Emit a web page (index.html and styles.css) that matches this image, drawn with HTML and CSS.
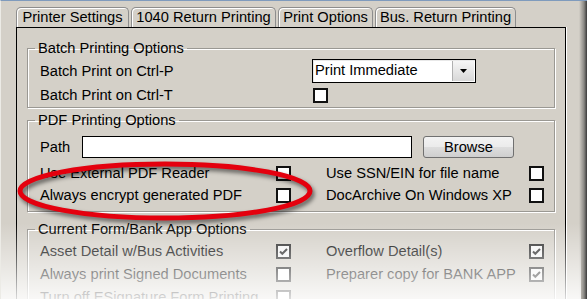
FILE: index.html
```html
<!DOCTYPE html>
<html>
<head>
<meta charset="utf-8">
<link rel="stylesheet" href="styles.css">
</head>
<body>
<div class="window">
  <div class="tabs">
    <div class="tab tab-1">Printer Settings</div>
    <div class="tab tab-2">1040 Return Printing</div>
    <div class="tab tab-3">Print Options</div>
    <div class="tab tab-4">Bus. Return Printing</div>
  </div>
  <div class="panel">
    <fieldset class="group g1">
      <legend>Batch Printing Options</legend>
      <div class="row1">
        <span class="label">Batch Print on Ctrl-P</span>
        <div class="select">
          <span class="select-text">Print Immediate</span>
          <span class="select-btn"><svg width="7" height="4" viewBox="0 0 7 4"><path d="M0 0H7L3.5 4Z" fill="#000"/></svg></span>
        </div>
        <span class="label">Batch Print on Ctrl-T</span>
        <span class="cb cb-g1"></span>
      </div>
    </fieldset>

    <fieldset class="group g2">
      <legend>PDF Printing Options</legend>
      <div class="path-row">
        <span class="label">Path</span>
        <div class="input"></div>
        <div class="button">Browse</div>
      </div>
      <div class="grid2 grid-g2">
        <span class="label">Use External PDF Reader</span>
        <span class="cb"></span>
        <span></span>
        <span class="label">Use SSN/EIN for file name</span>
        <span class="cb"></span>

        <span class="label">Always encrypt generated PDF</span>
        <span class="cb"></span>
        <span></span>
        <span class="label">DocArchive On Windows XP</span>
        <span class="cb"></span>
      </div>
    </fieldset>

    <fieldset class="group g3">
      <legend>Current Form/Bank App Options</legend>
      <div class="grid2 grid-g3">
        <span class="label">Asset Detail w/Bus Activities</span>
        <span class="cb checked"><svg width="11" height="11" viewBox="0 0 11 11"><path d="M2 5.5L4.3 7.8L9 3" fill="none" stroke="#222" stroke-width="2"/></svg></span>
        <span></span>
        <span class="label">Overflow Detail(s)</span>
        <span class="cb checked"><svg width="11" height="11" viewBox="0 0 11 11"><path d="M2 5.5L4.3 7.8L9 3" fill="none" stroke="#222" stroke-width="2"/></svg></span>

        <span class="label">Always print Signed Documents</span>
        <span class="cb"></span>
        <span></span>
        <span class="label">Preparer copy for BANK APP</span>
        <span class="cb checked"><svg width="11" height="11" viewBox="0 0 11 11"><path d="M2 5.5L4.3 7.8L9 3" fill="none" stroke="#222" stroke-width="2"/></svg></span>

        <span class="label">Turn off ESignature Form Printing</span>
        <span class="cb"></span>
        <span></span>
        <span class="label"></span>
        <span></span>
      </div>
    </fieldset>
  </div>
  <div class="fade"></div>
  <svg class="annot" width="587" height="299" viewBox="0 0 587 299">
    <ellipse cx="165" cy="191" rx="145" ry="27" fill="none" stroke="#e4000e" stroke-width="5"/>
  </svg>
</div>
</body>
</html>
```
FILE: styles.css
```css
html, body {
  margin: 0;
  padding: 0;
}
body {
  width: 587px;
  height: 299px;
  overflow: hidden;
  font-family: "Liberation Sans", Arial, sans-serif;
  font-size: 11pt;
  color: #000;
}
.window {
  position: relative;
  width: 587px;
  height: 299px;
  box-sizing: border-box;
  border-top: 1px solid #7f9bbd;
  border-left: 1px solid #ecebe6;
  background: linear-gradient(to left, #3a3a3a 0, #8a8884 3px, #d4d0c8 8px, #d4d0c8 100%);
  overflow: hidden;
}
.tabs {
  display: flex;
  gap: 2px;
  margin-left: 15px;
  padding-top: 6px;
  height: 20px;
}
.tab {
  box-sizing: border-box;
  height: 20px;
  padding: 0 2px;
  line-height: 19px;
  text-align: center;
  border: 1px solid #8d8d8d;
  border-bottom: none;
  border-radius: 5px 5px 0 0;
  box-shadow: inset 1px 1px 0 #fff;
  background: #d4d0c8;
  white-space: nowrap;
}
.tab-1 { width: 113px; }
.tab-2 { width: 145px; }
.tab-3 { width: 95px; }
.tab-4 { width: 141px; }
.panel {
  box-sizing: border-box;
  margin-left: 15px;
  width: 550px;
  height: 280px;
  border: 1px solid #000;
  border-bottom: none;
  box-shadow: 1px 0 0 #fff;
  padding: 12px 10px 0 10px;
  background: #d4d0c8;
}
.group {
  margin: 0;
  padding: 0 10px 0 12px;
  border: 1px solid #9a9893;
  box-shadow: inset 1px 1px 0 #fff, 1px 1px 0 #fff;
  min-width: 0;
}
.group legend {
  padding: 0 3px;
  margin-left: -5px;
  line-height: 17px;
}
.label {
  white-space: nowrap;
  line-height: 17px;
}
.row1 {
  display: grid;
  grid-template-columns: 272px 163px;
  grid-template-rows: 24px 24px;
  align-items: center;
  margin-top: 2px;
}
.select {
  box-sizing: border-box;
  height: 24px;
  width: 164px;
  border: 1px solid #000;
  background: #fff;
  display: flex;
  align-items: stretch;
  box-shadow: inset 1px 1px 0 #e8e8e8;
}
.select-text {
  flex: 1;
  padding-left: 2px;
  line-height: 21px;
}
.select-btn {
  width: 21px;
  border-left: 1px solid #b0b0b0;
  background: linear-gradient(#f6f6f6, #d8d8d8);
  display: flex;
  align-items: center;
  justify-content: center;
  margin: 1px;
  margin-left: 0;
}
.cb {
  box-sizing: border-box;
  width: 15px;
  height: 15px;
  border: 2px solid #111;
  background: #fff;
  display: flex;
  align-items: center;
  justify-content: center;
}
.cb-g1 {
  margin-left: 1px;
}
.cb.checked {
  border-color: #222;
  background: #f4f4f4;
}
.path-row {
  display: flex;
  align-items: center;
  margin-top: 7px;
  height: 22px;
}
.path-row .label {
  width: 42px;
}
.input {
  box-sizing: border-box;
  width: 330px;
  height: 22px;
  border: 1px solid #000;
  background: #fff;
}
.button {
  box-sizing: border-box;
  margin-left: 11px;
  width: 91px;
  height: 22px;
  border: 1px solid #707070;
  border-radius: 3px;
  background: linear-gradient(#f3f3f3 0, #ebebeb 50%, #dddddd 51%, #cfcfcf 100%);
  text-align: center;
  line-height: 20px;
}
.grid2 {
  display: grid;
  grid-template-columns: 236px 15px 35px 203px 15px;
  grid-auto-rows: 22px;
  align-items: center;
}
.grid-g2 {
  margin-top: 4px;
  padding-bottom: 5px;
}
.g2 {
  margin-top: 4px;
}
.g3 {
  margin-top: 9px;
}
.grid-g3 {
  grid-auto-rows: 23px;
  margin-top: 2px;
}
.fade {
  position: absolute;
  left: 0;
  width: 580px;
  top: 222px;
  bottom: 0;
  background: linear-gradient(rgba(255,255,255,0) 0, rgba(255,255,255,0.85) 100%);
  pointer-events: none;
}
.annot {
  position: absolute;
  left: -1px;
  top: -1px;
  filter: drop-shadow(2px 3px 2px rgba(0,0,0,0.55));
  pointer-events: none;
}
```
